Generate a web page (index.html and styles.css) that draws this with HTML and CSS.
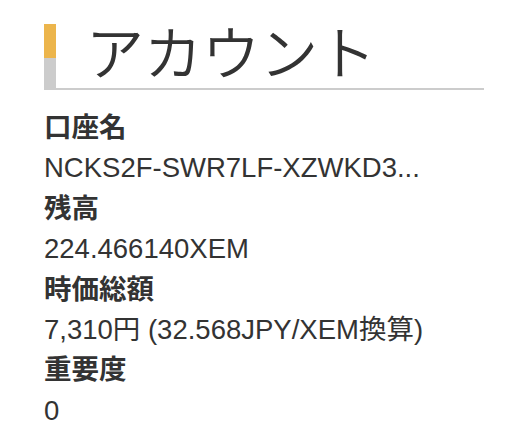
FILE: index.html
```html
<!DOCTYPE html>
<html lang="ja">
<head>
<meta charset="utf-8">
<link rel="stylesheet" href="styles.css">
</head>
<body>
<div class="page">
  <div class="heading">
    <div class="bar"></div>
    <h1 class="title">アカウント</h1>
  </div>
  <dl class="info">
    <dt>口座名</dt>
    <dd>NCKS2F-SWR7LF-XZWKD3...</dd>
    <dt>残高</dt>
    <dd>224.466140XEM</dd>
    <dt>時価総額</dt>
    <dd>7,310円 (32.568JPY/XEM換算)</dd>
    <dt>重要度</dt>
    <dd>0</dd>
  </dl>
</div>
</body>
</html>
```
FILE: styles.css
```css
html, body {
  margin: 0;
  padding: 0;
  background: #fff;
}
.page {
  padding: 24px 46px 0 44px;
  color: #333;
  font-family: "Liberation Sans", "Noto Sans CJK JP", sans-serif;
}
.heading {
  display: flex;
  height: 66px;
}
.bar {
  width: 12px;
  flex: none;
  background: linear-gradient(to bottom, #ecb54c 0, #ecb54c 34px, #cccccc 34px, #cccccc 100%);
}
.title {
  flex: 1;
  margin: 0;
  padding-left: 30px;
  border-bottom: 2px solid #cccccc;
  font-family: "Noto Sans CJK JP", sans-serif;
  font-weight: 350;
  font-size: 58px;
  line-height: 53px;
  color: #333;
}
.info {
  margin: 18px 0 0 0;
  font-size: 27.5px;
  line-height: 40.4px;
}
.info dt {
  font-weight: bold;
}
.info dd {
  margin: 0;
}
```
